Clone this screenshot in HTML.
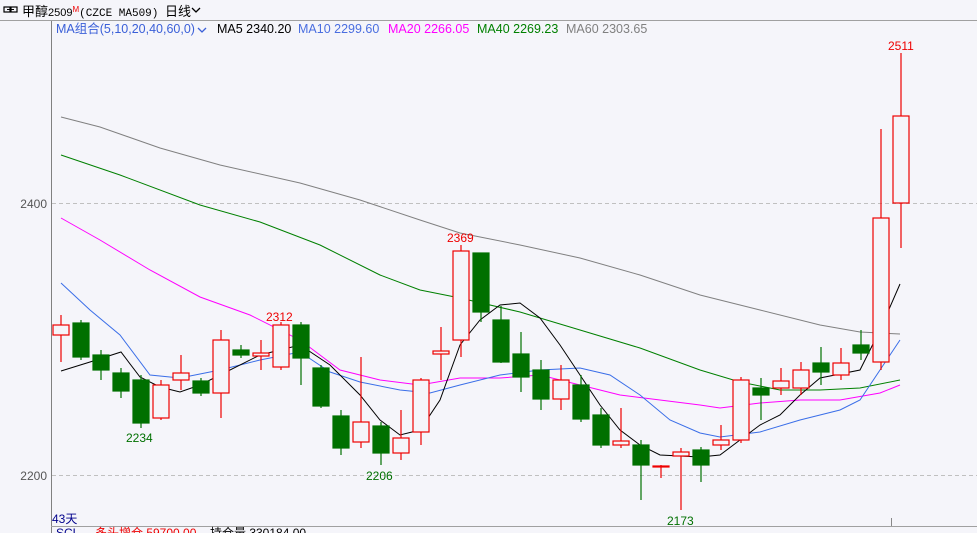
<!DOCTYPE html>
<html><head><meta charset="utf-8"><style>
html,body{margin:0;padding:0;background:#f5f5fa;width:977px;height:533px;overflow:hidden;font-family:"Liberation Sans","Noto Sans CJK SC",sans-serif}
svg{position:absolute;left:0;top:0}
</style></head><body>
<svg width="977" height="533" xmlns="http://www.w3.org/2000/svg" font-family="Liberation Sans, Noto Sans CJK SC, sans-serif">
<rect width="977" height="533" fill="#f5f5fa"/>
<line x1="0" y1="20.5" x2="977" y2="20.5" stroke="#a0a0a0"/>
<line x1="51.5" y1="21" x2="51.5" y2="533" stroke="#808080"/>
<line x1="51" y1="526.5" x2="977" y2="526.5" stroke="#a0a0a0"/>
<!-- header -->
<rect x="4" y="7" width="6" height="5" fill="none" stroke="#000" stroke-width="1.2"/><rect x="11" y="7" width="6" height="5" fill="none" stroke="#000" stroke-width="1.2"/><line x1="7" y1="9.5" x2="14" y2="9.5" stroke="#000"/>
<text x="22" y="16" font-size="13" fill="#000">甲醇<tspan font-size="11">2509</tspan><tspan font-size="8" fill="#e00" dy="-4">M</tspan><tspan dy="4" font-size="11" font-family="Liberation Mono, monospace">(CZCE MA509)</tspan></text>
<text x="165" y="16" font-size="13" fill="#000">日线</text>
<path d="M192 8 L196 12 L200 8" fill="none" stroke="#000" stroke-width="1.3"/>
<text x="56" y="33" font-size="12.5" fill="#3a5fd8">MA组合(5,10,20,40,60,0)</text>
<path d="M198 28 L202 32 L206 28" fill="none" stroke="#3a5fd8" stroke-width="1.3"/>
<text x="217" y="33" font-size="12.5" fill="#000">MA5 2340.20</text>
<text x="298" y="33" font-size="12.5" fill="#4a6ee0">MA10 2299.60</text>
<text x="388" y="33" font-size="12.5" fill="#f0f">MA20 2266.05</text>
<text x="477" y="33" font-size="12.5" fill="#008000">MA40 2269.23</text>
<text x="566" y="33" font-size="12.5" fill="#808080">MA60 2303.65</text>
<!-- grid -->
<line x1="52" y1="203.5" x2="977" y2="203.5" stroke="#c0c0c0" stroke-dasharray="4,3"/>
<line x1="52" y1="475.5" x2="977" y2="475.5" stroke="#c0c0c0" stroke-dasharray="4,3"/>
<text x="47" y="208" font-size="12" fill="#555" text-anchor="end">2400</text>
<text x="47" y="480" font-size="12" fill="#555" text-anchor="end">2200</text>
<text x="52" y="523" font-size="12" fill="#00008b">43天</text>
<line x1="891.5" y1="518" x2="891.5" y2="526" stroke="#888"/>
<!-- MA lines -->
<g fill="none" stroke-width="1">
<polyline stroke="#808080" points="61,117 100,127 160,148 220,165 300,183 360,200 420,220 460,233 520,245 580,258 640,275 700,295 760,310 820,325 860,332 900,334"/>
<polyline stroke="#008000" points="61,155 120,175 200,205 260,222 320,245 380,275 420,290 460,298 520,312 580,330 640,348 700,370 740,382 780,390 820,390 860,388 900,380"/>
<polyline stroke="#f0f" points="61,218 100,240 150,270 200,297 250,315 300,340 340,370 380,380 420,385 460,378 500,378 540,375 580,385 620,395 660,400 700,405 720,408 760,403 800,400 840,400 880,393 900,385"/>
<polyline stroke="#3a6ee8" points="61,283 90,310 120,335 150,375 180,378 220,370 260,360 300,352 330,372 360,382 400,390 430,393 460,385 500,375 540,370 580,368 610,375 640,395 670,420 700,433 720,437 760,432 800,420 840,410 860,400 880,370 900,340"/>
<polyline stroke="#000" points="61,371 90,362 121,352 140,377 160,387 180,392 200,385 220,375 260,355 300,345 330,365 360,395 380,420 400,435 420,430 440,400 460,345 480,320 500,305 520,303 540,318 560,345 580,375 600,405 620,430 640,445 660,455 700,457 720,455 740,440 760,425 780,415 800,395 820,378 860,370 880,330 900,284"/>
</g>
<!-- candles -->
<g stroke-width="1.2">
<g stroke="#e00" fill="#f5f5fa">
<line x1="61" y1="315" x2="61" y2="362"/><rect x="53" y="325" width="16" height="10"/>
<line x1="161" y1="380" x2="161" y2="420"/><rect x="153" y="385" width="16" height="33"/>
<line x1="181" y1="355" x2="181" y2="390"/><rect x="173" y="373" width="16" height="7"/>
<line x1="221" y1="330" x2="221" y2="418"/><rect x="213" y="340" width="16" height="53"/>
<line x1="261" y1="340" x2="261" y2="370"/><rect x="253" y="353" width="16" height="3"/>
<line x1="281" y1="322" x2="281" y2="370"/><rect x="273" y="325" width="16" height="42"/>
<line x1="361" y1="357" x2="361" y2="448"/><rect x="353" y="422" width="16" height="20"/>
<line x1="401" y1="410" x2="401" y2="460"/><rect x="393" y="438" width="16" height="15"/>
<line x1="421" y1="378" x2="421" y2="445"/><rect x="413" y="380" width="16" height="52"/>
<line x1="441" y1="327" x2="441" y2="380"/><rect x="433" y="351" width="16" height="3"/>
<line x1="461" y1="245" x2="461" y2="357"/><rect x="453" y="251" width="16" height="89"/>
<line x1="561" y1="365" x2="561" y2="410"/><rect x="553" y="380" width="16" height="19"/>
<line x1="621" y1="408" x2="621" y2="448"/><rect x="613" y="441" width="16" height="4"/>
<line x1="661" y1="465" x2="661" y2="478"/><rect x="653" y="466" width="16" height="1"/>
<line x1="681" y1="448" x2="681" y2="510"/><rect x="673" y="452" width="16" height="4"/>
<line x1="721" y1="425" x2="721" y2="450"/><rect x="713" y="440" width="16" height="5"/>
<line x1="741" y1="377" x2="741" y2="443"/><rect x="733" y="380" width="16" height="60"/>
<line x1="781" y1="368" x2="781" y2="395"/><rect x="773" y="381" width="16" height="7"/>
<line x1="801" y1="362" x2="801" y2="395"/><rect x="793" y="370" width="16" height="18"/>
<line x1="841" y1="348" x2="841" y2="380"/><rect x="833" y="363" width="16" height="12"/>
<line x1="881" y1="129" x2="881" y2="370"/><rect x="873" y="218" width="16" height="144"/>
<line x1="901" y1="53" x2="901" y2="248"/><rect x="893" y="116" width="16" height="87"/>
</g>
<g stroke="#007000" fill="#007000">
<line x1="81" y1="320" x2="81" y2="360"/><rect x="73" y="323" width="16" height="34"/>
<line x1="101" y1="350" x2="101" y2="380"/><rect x="93" y="355" width="16" height="15"/>
<line x1="121" y1="368" x2="121" y2="398"/><rect x="113" y="373" width="16" height="18"/>
<line x1="141" y1="375" x2="141" y2="428"/><rect x="133" y="380" width="16" height="43"/>
<line x1="201" y1="378" x2="201" y2="396"/><rect x="193" y="381" width="16" height="12"/>
<line x1="241" y1="345" x2="241" y2="358"/><rect x="233" y="350" width="16" height="5"/>
<line x1="301" y1="322" x2="301" y2="385"/><rect x="293" y="325" width="16" height="33"/>
<line x1="321" y1="365" x2="321" y2="408"/><rect x="313" y="368" width="16" height="38"/>
<line x1="341" y1="410" x2="341" y2="455"/><rect x="333" y="416" width="16" height="32"/>
<line x1="381" y1="422" x2="381" y2="465"/><rect x="373" y="426" width="16" height="27"/>
<line x1="481" y1="253" x2="481" y2="322"/><rect x="473" y="253" width="16" height="59"/>
<line x1="501" y1="306" x2="501" y2="363"/><rect x="493" y="320" width="16" height="42"/>
<line x1="521" y1="332" x2="521" y2="392"/><rect x="513" y="354" width="16" height="23"/>
<line x1="541" y1="360" x2="541" y2="410"/><rect x="533" y="370" width="16" height="29"/>
<line x1="581" y1="375" x2="581" y2="422"/><rect x="573" y="385" width="16" height="34"/>
<line x1="601" y1="408" x2="601" y2="448"/><rect x="593" y="415" width="16" height="30"/>
<line x1="641" y1="440" x2="641" y2="500"/><rect x="633" y="445" width="16" height="20"/>
<line x1="701" y1="447" x2="701" y2="482"/><rect x="693" y="450" width="16" height="15"/>
<line x1="761" y1="378" x2="761" y2="420"/><rect x="753" y="388" width="16" height="7"/>
<line x1="821" y1="347" x2="821" y2="385"/><rect x="813" y="363" width="16" height="9"/>
<line x1="861" y1="330" x2="861" y2="360"/><rect x="853" y="345" width="16" height="8"/>
</g>
</g>
<!-- labels -->
<g font-size="12">
<text x="888" y="50" fill="#e00">2511</text>
<text x="447" y="242" fill="#e00">2369</text>
<text x="266" y="321" fill="#e00">2312</text>
<text x="126" y="442" fill="#007000">2234</text>
<text x="366" y="480" fill="#007000">2206</text>
<text x="667" y="525" fill="#007000">2173</text>
</g>
<text x="56" y="537" font-size="12" fill="#00008b">SCL</text>
<text x="95" y="537" font-size="12" fill="#e00">多头增仓 59700.00</text>
<text x="210" y="537" font-size="12" fill="#000">持仓量 330184.00</text>
</svg>
</body></html>
